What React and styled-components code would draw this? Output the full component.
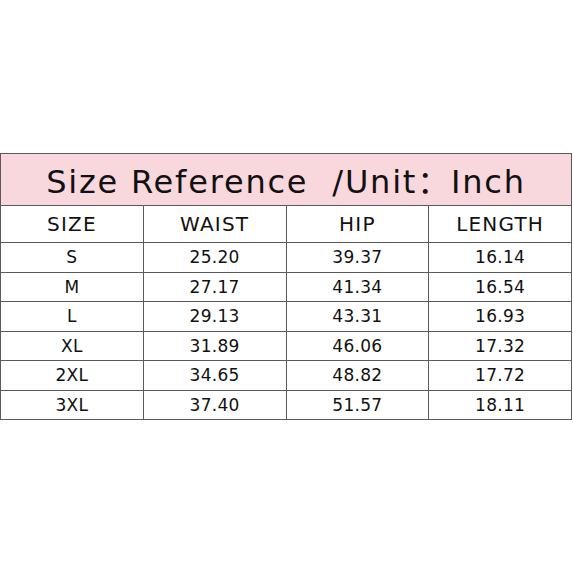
import React from 'react'
import styled, { createGlobalStyle } from 'styled-components'

const GlobalStyle = createGlobalStyle`
    html, body {
        margin: 0;
        padding: 0;
        background: #ffffff;
    }
`

const Page = styled.div`
    width: 573px;
    height: 573px;
    padding-top: 153px;
    box-sizing: border-box;
    font-family: "DejaVu Sans", "Noto Sans CJK SC", sans-serif;
    color: #111;
`

const Table = styled.table`
    width: 572px;
    border-collapse: collapse;
    table-layout: fixed;
`

const TitleCell = styled.th`
    height: 49px;
    padding: 0 0 2px;
    background: #f9d8dd;
    border: 1px solid #5a5a5a;
    font-size: 32px;
    font-weight: normal;
    letter-spacing: 1.8px;
    text-align: center;
    white-space: pre;
`

const Cell = styled.td`
    height: ${p => (p.$head ? '36px' : '28.5px')};
    padding: 0;
    border: 1px solid #5a5a5a;
    text-align: center;
    font-size: ${p => (p.$head ? '20px' : '17px')};
    letter-spacing: ${p => (p.$head ? '1.2px' : '0.3px')};
`

const rows = [
    ['S', '25.20', '39.37', '16.14'],
    ['M', '27.17', '41.34', '16.54'],
    ['L', '29.13', '43.31', '16.93'],
    ['XL', '31.89', '46.06', '17.32'],
    ['2XL', '34.65', '48.82', '17.72'],
    ['3XL', '37.40', '51.57', '18.11'],
]

const App = () => (
    <Page>
        <GlobalStyle />
        <Table>
            <thead>
                <tr>
                    <TitleCell colSpan={4}>{'Size Reference  /Unit：Inch'}</TitleCell>
                </tr>
            </thead>
            <tbody>
                <tr>
                    {['SIZE', 'WAIST', 'HIP', 'LENGTH'].map(h => (
                        <Cell $head key={h}>{h}</Cell>
                    ))}
                </tr>
                {rows.map(r => (
                    <tr key={r[0]}>
                        {r.map((v, i) => (
                            <Cell key={i}>{v}</Cell>
                        ))}
                    </tr>
                ))}
            </tbody>
        </Table>
    </Page>
)

export default App
